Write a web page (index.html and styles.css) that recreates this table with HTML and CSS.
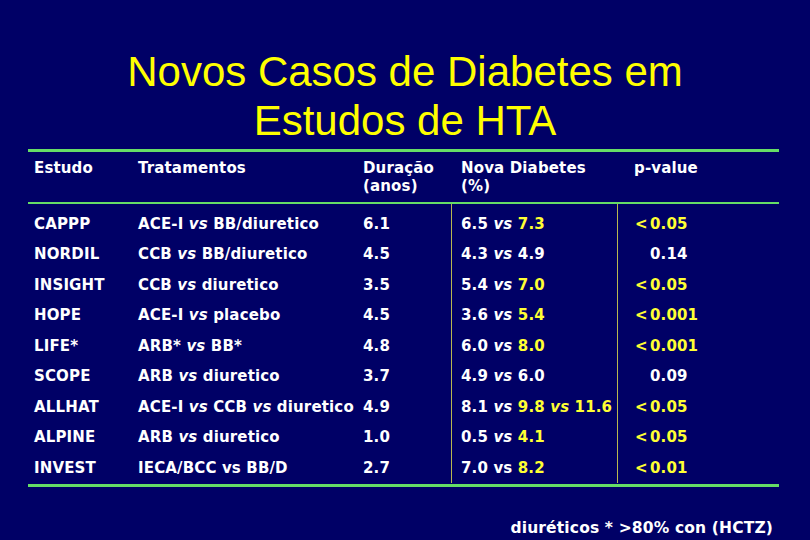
FILE: index.html
```html
<!DOCTYPE html>
<html lang="pt">
<head>
<meta charset="utf-8">
<title>Novos Casos de Diabetes em Estudos de HTA</title>
<link rel="stylesheet" href="styles.css">
</head>
<body>
<div class="slide">
  <h1 class="title">Novos Casos de Diabetes em<br>Estudos de HTA</h1>
  <div class="table">
    <div class="row head">
      <div class="c1">Estudo</div>
      <div class="c2">Tratamentos</div>
      <div class="c3">Duração<br>(anos)</div>
      <div class="c4 h">Nova Diabetes<br>(%)</div>
      <div class="c5 hp">p-value</div>
    </div>
    <div class="body">
      <div class="row">
        <div class="c1">CAPPP</div>
        <div class="c2">ACE-I <i>vs</i> BB/diuretico</div>
        <div class="c3">6.1</div>
        <div class="c4">6.5 <i>vs</i> <span class="y">7.3</span></div>
        <div class="c5 y"><span class="lt">&lt;</span>0.05</div>
      </div>
      <div class="row">
        <div class="c1">NORDIL</div>
        <div class="c2">CCB <i>vs</i> BB/diuretico</div>
        <div class="c3">4.5</div>
        <div class="c4">4.3 <i>vs</i> 4.9</div>
        <div class="c5"><span class="lt"></span>0.14</div>
      </div>
      <div class="row">
        <div class="c1">INSIGHT</div>
        <div class="c2">CCB <i>vs</i> diuretico</div>
        <div class="c3">3.5</div>
        <div class="c4">5.4 <i>vs</i> <span class="y">7.0</span></div>
        <div class="c5 y"><span class="lt">&lt;</span>0.05</div>
      </div>
      <div class="row">
        <div class="c1">HOPE</div>
        <div class="c2">ACE-I <i>vs</i> placebo</div>
        <div class="c3">4.5</div>
        <div class="c4">3.6 <i>vs</i> <span class="y">5.4</span></div>
        <div class="c5 y"><span class="lt">&lt;</span>0.001</div>
      </div>
      <div class="row">
        <div class="c1">LIFE*</div>
        <div class="c2">ARB* <i>vs</i> BB*</div>
        <div class="c3">4.8</div>
        <div class="c4">6.0 <i>vs</i> <span class="y">8.0</span></div>
        <div class="c5 y"><span class="lt">&lt;</span>0.001</div>
      </div>
      <div class="row">
        <div class="c1">SCOPE</div>
        <div class="c2">ARB <i>vs</i> diuretico</div>
        <div class="c3">3.7</div>
        <div class="c4">4.9 <i>vs</i> 6.0</div>
        <div class="c5"><span class="lt"></span>0.09</div>
      </div>
      <div class="row">
        <div class="c1">ALLHAT</div>
        <div class="c2">ACE-I <i>vs</i> CCB <i>vs</i> diuretico</div>
        <div class="c3">4.9</div>
        <div class="c4">8.1 <i>vs</i> <span class="y">9.8 <i>vs</i> 11.6</span></div>
        <div class="c5 y"><span class="lt">&lt;</span>0.05</div>
      </div>
      <div class="row">
        <div class="c1">ALPINE</div>
        <div class="c2">ARB <i>vs</i> diuretico</div>
        <div class="c3">1.0</div>
        <div class="c4">0.5 <i>vs</i> <span class="y">4.1</span></div>
        <div class="c5 y"><span class="lt">&lt;</span>0.05</div>
      </div>
      <div class="row">
        <div class="c1">INVEST</div>
        <div class="c2">IECA/BCC vs BB/D</div>
        <div class="c3">2.7</div>
        <div class="c4">7.0 vs <span class="y">8.2</span></div>
        <div class="c5 y"><span class="lt">&lt;</span>0.01</div>
      </div>
    </div>
  </div>
  <div class="foot">diuréticos * &gt;80% con (HCTZ)</div>
</div>
</body>
</html>
```
FILE: styles.css
```css
html, body {
  margin: 0;
  padding: 0;
  background: #000066;
}
.slide {
  width: 810px;
  height: 540px;
  background: #000066;
  color: #ffffff;
  font-family: "DejaVu Sans", Verdana, sans-serif;
  font-weight: bold;
  font-size: 15px;
  letter-spacing: 0.15px;
  overflow: hidden;
}
.title {
  margin: 0;
  padding-top: 47px;
  font-family: "Liberation Sans", Arial, sans-serif;
  font-weight: normal;
  font-size: 42px;
  line-height: 49px;
  letter-spacing: 0;
  color: #ffff00;
  text-align: center;
}
.table {
  margin: 4px 31px 0 28px;
  width: 751px;
  border-top: 3px solid #66dd66;
  border-bottom: 3px solid #66dd66;
}
.row {
  display: grid;
  grid-template-columns: 105px 224px 94px 167px 161px;
  height: 30.5px;
  line-height: 30.5px;
  white-space: nowrap;
}
.row.head {
  height: auto;
  line-height: 18px;
  padding: 7px 0;
  border-bottom: 2px solid #66dd66;
}
.body {
  padding: 4.5px 0 1px;
}
.c1 { padding-left: 6px; }
.c2 { padding-left: 5px; }
.c3 { padding-left: 6px; }
.c4 {
  padding-left: 9px;
  border-left: 1px solid #b8b850;
  border-right: 1px solid #b8b850;
}
.c4.h {
  padding-left: 10px;
  border: none;
}
.c5 { padding-left: 17px; }
.c5.hp { padding-left: 16px; }
.body .row:first-child .c4 { margin-top: -5px; padding-top: 5px; }
i { font-style: italic; }
.y { color: #ffff33; }
.lt {
  display: inline-block;
  width: 15px;
}
.foot {
  padding-top: 32px;
  padding-right: 37px;
  font-size: 15.5px;
  line-height: 18px;
  text-align: right;
}
```
